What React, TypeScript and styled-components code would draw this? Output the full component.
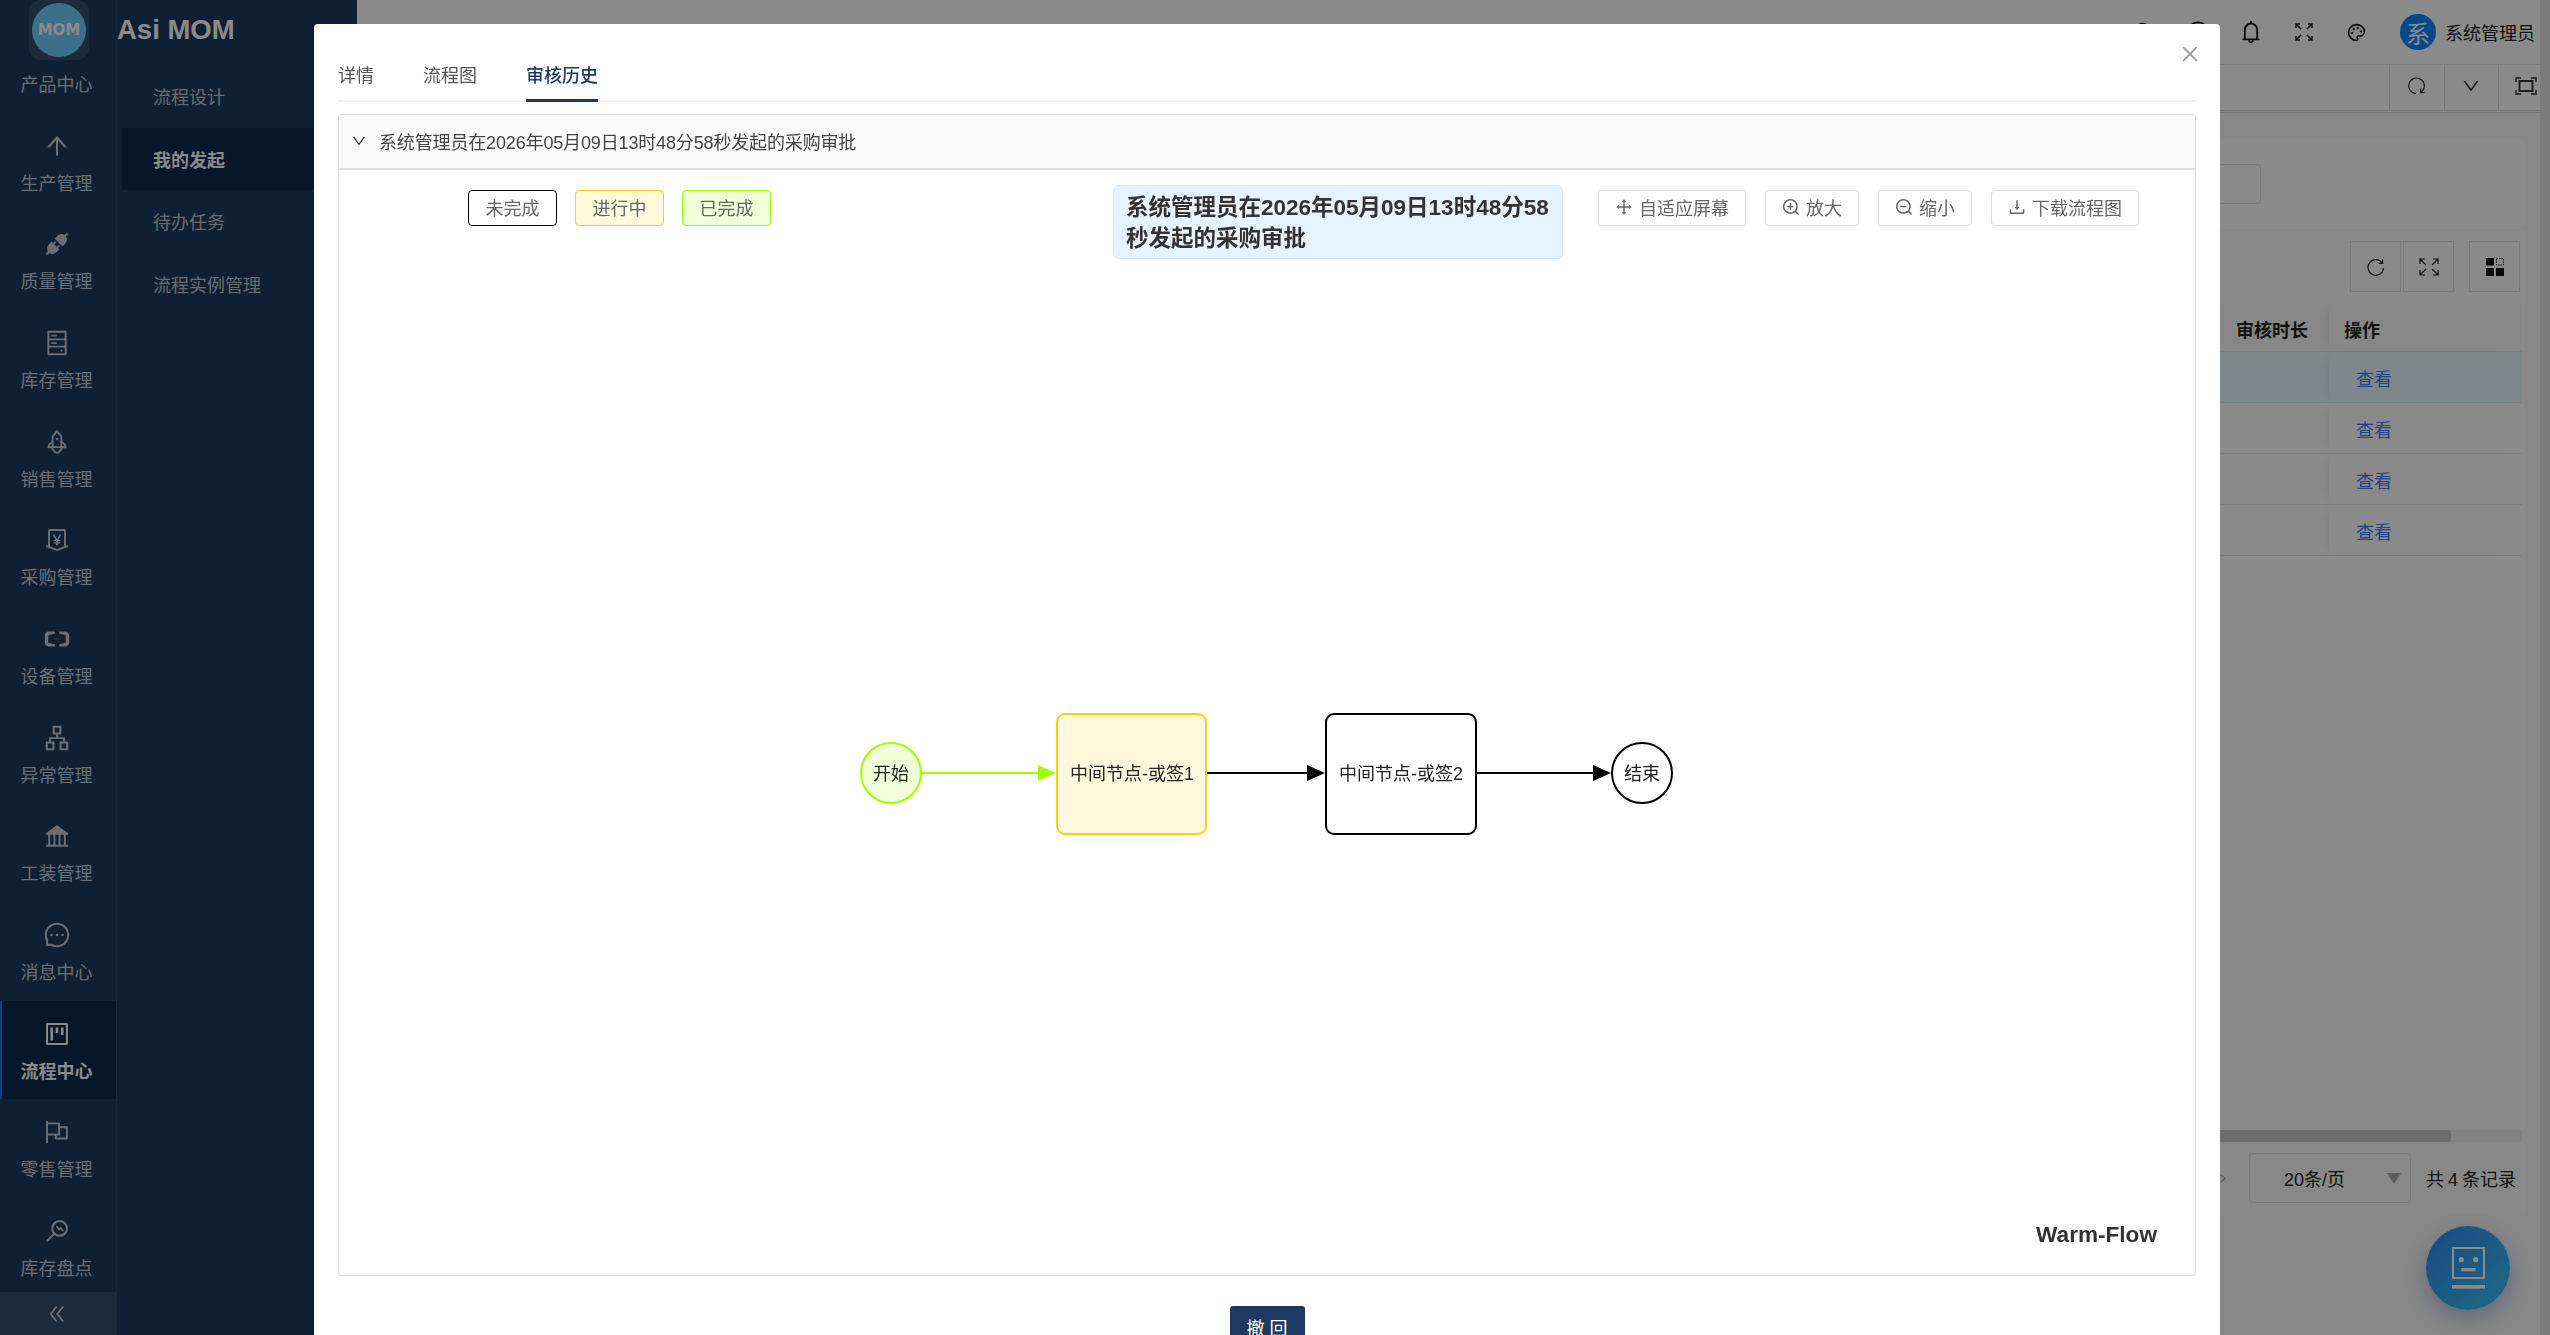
import React from "react";
import styled, { createGlobalStyle } from "styled-components";
import {
  AiOutlineArrowUp, AiFillApi, AiOutlineHdd, AiOutlineRocket, AiOutlineMoneyCollect, AiOutlineAliyun,
  AiOutlineApartment, AiFillBank, AiOutlineMessage, AiOutlineProject, AiOutlineFlag, AiOutlineMonitor,
  AiOutlineDoubleLeft, AiOutlineBell, AiOutlineClose, AiOutlineDown, AiOutlineDrag,
  AiOutlineZoomIn, AiOutlineZoomOut, AiOutlineDownload, AiOutlineSearch, AiOutlineQuestionCircle,
  AiOutlineRight, AiOutlineMenu,
} from "react-icons/ai";
import { LuPalette } from "react-icons/lu";

const FONT = `"Liberation Sans", "Noto Sans CJK SC", sans-serif`;

const Global = createGlobalStyle`
  html, body { margin: 0; padding: 0; height: 100%; overflow: hidden; background: #fff; }
  body { font-family: ${FONT}; font-size: 18px; color: #333; }
  #root { height: 100%; }
  * { box-sizing: border-box; }
`;

const Shell = styled.div`display: flex; width: 100%; height: 100vh; overflow: hidden;`;

const Rail = styled.aside`
  flex: 0 0 117px; height: 100%; display: flex; flex-direction: column;
  background: #1c3b62; box-shadow: inset -1px 0 0 #25466d;
`;
const LogoSlot = styled.div`flex: 0 0 60px; display: flex; justify-content: center; padding-left: 1px;`;
const LogoTile = styled.div`
  width: 60px; height: 60px; border-radius: 12px; background: #34506f;
  display: flex; align-items: center; justify-content: center;
`;
const LogoDisc = styled.div`
  width: 54px; height: 54px; border-radius: 50%; background: #70d0ff;
  display: flex; align-items: center; justify-content: center;
  color: #fff; font-family: "DejaVu Sans", sans-serif; font-weight: 700; font-size: 15px;
`;
const RailList = styled.div`flex: 1; min-height: 0; overflow: hidden; display: flex; flex-direction: column;`;
const RailItem = styled.div<{ $active?: boolean; $bare?: boolean }>`
  flex: 0 0 ${(p) => (p.$bare ? "52.6px" : "98.7px")};
  width: 116px;
  display: flex; flex-direction: column; align-items: center; justify-content: flex-start;
  padding: ${(p) => (p.$bare ? "12px" : "19px")} 3px 0 0;
  background: ${(p) => (p.$active ? "#0d2a4c" : "transparent")};
  box-shadow: ${(p) => (p.$active ? "inset 2px 0 0 #1c75df" : "none")};
  color: ${(p) => (p.$active ? "#fff" : "#c6ccd6")};
  font-size: 18px; line-height: 26px; font-weight: ${(p) => (p.$active ? 700 : 400)};
  svg { font-size: 28px; margin-bottom: 11px; display: block; }
`;
const Collapse = styled.div`
  flex: 0 0 43px; background: #34506f; color: #c6ccd6; padding-right: 3px;
  display: flex; align-items: center; justify-content: center; font-size: 22px;
`;

const SubNav = styled.nav`flex: 0 0 240px; height: 100%; background: #1c3b62; display: flex; flex-direction: column;`;
const Brand = styled.div`
  flex: 0 0 65px; display: flex; align-items: flex-start; justify-content: space-between;
  padding: 13px 12px 0 0; font-size: 27.5px; font-weight: 700; color: #fff; line-height: 34px;
  svg { font-size: 20px; margin-top: 8px; color: #ddd; }
`;
const SubItem = styled.div<{ $active?: boolean }>`
  height: 62.6px; margin-left: 5px; padding-left: 31px; display: flex; align-items: center;
  font-size: 18px; color: ${(p) => (p.$active ? "#fff" : "#c0c8d0")};
  font-weight: ${(p) => (p.$active ? 700 : 400)};
  background: ${(p) => (p.$active ? "#0d2a4c" : "transparent")};
`;

const Main = styled.main`flex: 1; min-width: 0; height: 100%; display: flex; flex-direction: column; background: #f9f9f9;`;
const TopBar = styled.header`
  flex: 0 0 65px; display: flex; align-items: center; padding: 0 5px 0 13px; background: #fff;
  border-bottom: 1px solid #e6e6e6; font-size: 18px; color: #333;
`;
const Crumbs = styled.div`display: flex; gap: 48px; width: 183px; white-space: nowrap;`;
const Notice = styled.div`display: flex; gap: 37px; margin-left: 652px; white-space: nowrap;`;
const TopRight = styled.div`display: flex; align-items: center; margin-left: auto;`;
const TopIcon = styled.span<{ $size?: number }>`
  width: 53px; display: flex; justify-content: center; color: #111; font-size: ${(p) => p.$size ?? 24}px;
`;
const Avatar = styled.span`
  width: 36px; height: 36px; margin-left: 17px; border-radius: 50%; background: #0b88ff; color: #fff;
  display: flex; align-items: center; justify-content: center; font-size: 24px;
`;
const UserName = styled.span`margin-left: 9px; color: #222; white-space: nowrap;`;

const TagBar = styled.div`
  flex: 0 0 48px; display: flex; justify-content: flex-end; background: #fff;
  border-bottom: 3px double #ddd;
`;
const TagBtn = styled.span<{ $w?: number; $pad?: number }>`
  width: ${(p) => p.$w ?? 54.5}px; display: flex; align-items: center; justify-content: center;
  padding: 0 0 3px ${(p) => p.$pad ?? 0}px;
  border-left: 1px solid #ddd; color: #333;
`;

const Content = styled.div`flex: 1; min-height: 0; display: flex; flex-direction: column; padding: 26px 15px 121px 15px;`;
const SearchCard = styled.section`
  flex: 0 0 90px; background: #fff; border-radius: 8px; display: flex; align-items: center;
  justify-content: flex-end; padding-right: 264px;
`;
const SearchInput = styled.div`width: 240px; height: 40px; border: 1px solid #dcdfe6; border-radius: 4px;`;
const TableCard = styled.section`
  flex: 1; min-height: 0; margin-top: 2px; padding-right: 3px; background: #fff; display: flex; flex-direction: column;
`;
const TableTools = styled.div`flex: 0 0 73px; display: flex; justify-content: flex-end; align-items: flex-start; padding: 10px 2px 0 0;`;
const ToolBtn = styled.span<{ $gap?: number }>`
  width: 51px; height: 51px; margin-left: ${(p) => p.$gap ?? 2}px; border: 1px solid #dcdfe6;
  display: flex; align-items: center; justify-content: center; color: #222;
`;
const Row = styled.div<{ $head?: boolean; $hi?: boolean }>`
  flex: 0 0 ${(p) => (p.$head ? "48px" : "51px")}; display: grid; grid-template-columns: 1fr 109px 193px;
  align-items: stretch; border-bottom: 1px solid #e8e8e8;
  background: ${(p) => (p.$hi ? "#e9fbff" : p.$head ? "#f9f9f9" : "#fff")};
  font-weight: ${(p) => (p.$head ? 700 : 400)}; color: ${(p) => (p.$head ? "#222" : "#333")};
`;
const Cell = styled.div`display: flex; align-items: center; padding: 2px 0 0 16px; white-space: nowrap;`;
const FixedCell = styled(Cell)<{ $link?: boolean }>`
  padding-left: ${(p) => (p.$link ? "27px" : "15px")};
  box-shadow: -8px 0 10px -8px rgba(0, 0, 0, .12);
  color: ${(p) => (p.$link ? "#3d7df5" : "inherit")};
`;
const TableFill = styled.div`flex: 1; min-height: 0;`;
const HScroll = styled.div`flex: 0 0 12px; background: #f3f3f3;`;
const HThumb = styled.div`width: 2079px; height: 100%; background: #c8c8c8; border-radius: 0 3px 3px 0;`;
const Pager = styled.div`flex: 0 0 72px; display: flex; align-items: center; justify-content: flex-end; padding-right: 6px; background: #fbfbfb; color: #222;`;
const PagerNext = styled.span`color: #999; font-size: 13px; margin-right: 20px; display: flex;`;
const PageSize = styled.div`
  width: 162px; height: 50px; border: 1px solid #dcdfe6; border-radius: 3px; display: flex; align-items: center;
  justify-content: space-between; padding: 0 9px 0 34px;
`;
const Caret = styled.span`width: 0; height: 0; border: 7px solid transparent; border-top: 11px solid #aaa; border-bottom: 0;`;
const Total = styled.span`margin-left: 15px; white-space: nowrap; word-spacing: -1px;`;
const PageTrack = styled.div`flex: 0 0 10px; height: 100%; background: #e4e4e4;`;

const Fab = styled.div`
  position: fixed; right: 40px; bottom: 25px; width: 84px; height: 84px; border-radius: 50%;
  background: linear-gradient(135deg, #3088f0, #3ac4f8); box-shadow: 0 8px 20px rgba(60, 90, 200, .35);
  display: flex; align-items: center; justify-content: center;
`;

const Overlay = styled.div`position: fixed; inset: 0; background: rgba(0, 0, 0, .46); z-index: 10;`;
const Modal = styled.div`
  position: fixed; z-index: 11; left: 314px; top: 24px; width: 1906px; bottom: 0; overflow: hidden;
  background: #fff; border-radius: 4px 4px 0 0; padding: 0 24px; display: flex; flex-direction: column;
`;
const CloseBtn = styled.span`position: absolute; top: 19px; right: 19px; color: #999; font-size: 22px; display: flex;`;
const Tabs = styled.div`flex: 0 0 78px; display: flex; align-items: flex-end; gap: 49px; border-bottom: 2px solid #f0f0f0;`;
const Tab = styled.div<{ $on?: boolean }>`
  height: 51px; margin-bottom: -2px; font-size: 18px; line-height: 26px; padding-top: 12px;
  color: ${(p) => (p.$on ? "#1f3a62" : "#555")}; font-weight: ${(p) => (p.$on ? 500 : 400)};
  border-bottom: 3px solid ${(p) => (p.$on ? "#1f3a62" : "transparent")};
`;
const Panel = styled.section`
  flex: 0 0 1162px; margin-top: 12px; border: 1px solid #dedede; border-radius: 3px; display: flex; flex-direction: column; overflow: hidden;
`;
const PanelHead = styled.div`
  flex: 0 0 55px; background: #fafafa; border-bottom: 2px solid #e0e0e0; display: flex; align-items: center;
  padding: 0 0 1px 12px; gap: 12px; font-size: 18px; color: #444; letter-spacing: -.15px;
  svg { font-size: 16px; color: #333; }
`;
const Toolbar = styled.div`flex: 0 0 90px; display: flex; align-items: flex-start; padding: 20px 0 0 129px;`;
const Legend = styled.div`display: flex; gap: 18px;`;
const LegendTag = styled.span<{ $bg: string; $line: string }>`
  width: 89px; height: 36px; padding-bottom: 2px; border-radius: 4px; border: 1.5px solid ${(p) => p.$line}; background: ${(p) => p.$bg};
  display: flex; align-items: center; justify-content: center; color: #666; font-size: 18px;
`;
const TitleBox = styled.div`
  width: 450px; height: 74px; margin: -5px 0 0 342px; padding: 7px 12px; background: #e6f3ff; border: 1px solid #d4e8fa;
  border-radius: 6px; color: #333; font-size: 22.5px; line-height: 30.5px; font-weight: 700;
`;
const Actions = styled.div`display: flex; gap: 19px; margin-left: 35px;`;
const ActionBtn = styled.span`
  height: 36px; padding: 0 16px 2px 15px; border: 1px solid #dcdfe6; border-radius: 4px; display: flex; align-items: center; gap: 5px;
  color: #666; font-size: 18px; white-space: nowrap;
  svg { font-size: 20px; flex: none; }
`;
const Canvas = styled.div`flex: 1; min-height: 0; overflow: hidden;`;
const Flow = styled.svg`
  display: block;
  text { font-family: ${FONT}; font-size: 18px; fill: #222; text-anchor: middle; dominant-baseline: central; }
`;
const Stamp = styled.div`
  flex: 0 0 80px; display: flex; justify-content: flex-end; padding: 21px 38px 0 0; color: #333;
  font-size: 22.6px; line-height: 38px; font-weight: 700;
`;
const ModalFoot = styled.div`flex: 0 0 60px; margin-top: 30px; display: flex; justify-content: center;`;
const PrimaryBtn = styled.span`
  width: 75px; height: 44px; padding: 0 0 2px 5px; background: #1f3a62; color: #fff; border-radius: 3px; display: flex; align-items: center;
  justify-content: center; font-size: 18px; letter-spacing: 5px;
`;

const railItems: [React.ReactNode, string][] = [
  [<AiOutlineArrowUp />, "生产管理"], [<AiFillApi />, "质量管理"], [<AiOutlineHdd />, "库存管理"],
  [<AiOutlineRocket />, "销售管理"], [<AiOutlineMoneyCollect />, "采购管理"], [<AiOutlineAliyun />, "设备管理"],
  [<AiOutlineApartment />, "异常管理"], [<AiFillBank />, "工装管理"], [<AiOutlineMessage />, "消息中心"],
  [<AiOutlineProject />, "流程中心"], [<AiOutlineFlag />, "零售管理"], [<AiOutlineMonitor />, "库存盘点"],
];

const ShrinkArrows = () => (
  <svg width="18" height="18" viewBox="0 0 18 18" fill="none" stroke="currentColor" strokeWidth="1.6">
    <path d="M2 2l4 4M16 2l-4 4M2 16l4-4M16 16l-4-4" />
    <path d="M1 5V1h4M13 1h4v4M1 13v4h4M13 17h4v-4" strokeWidth="1.4" />
  </svg>
);
const FrameIcon = () => (
  <svg width="22" height="18" viewBox="0 0 22 18" fill="none" stroke="#333" strokeWidth="1.5">
    <path d="M1 5V1h5M16 1h5v4M1 13v4h5M16 17h5v-4" />
    <rect x="4.5" y="4" width="13" height="10" strokeWidth="2" />
  </svg>
);
const ArcArrow = ({ turned, size = 18 }: { turned?: boolean; size?: number }) => (
  <svg width={size} height={size} viewBox="0 0 18 18" fill="none" stroke="currentColor" strokeWidth="1.2"
    transform={turned ? "rotate(90)" : undefined}>
    <path d="M15.2 5A7.8 7.8 0 1 0 16.6 10" />
    <path d="M15.6 1.4V5.3H11.7" />
  </svg>
);
const ExpandIcon = () => (
  <svg width="20" height="18" viewBox="0 0 20 18" fill="none" stroke="#222" strokeWidth="1.2">
    <path d="M1 6V1h5M1 1l6 6M19 6V1h-5M19 1l-6 6M1 12v5h5M1 17l6-6M19 12v5h-5M19 17l-6-6" />
  </svg>
);
const LayoutIcon = () => (
  <svg width="20" height="18" viewBox="0 0 20 18">
    <rect x="1" y="0" width="8" height="7.5" fill="#111" />
    <rect x="11.5" y="0.5" width="7" height="6.5" fill="none" stroke="#222" strokeDasharray="1.5 1" />
    <rect x="1" y="10" width="8" height="8" fill="#111" />
    <rect x="11" y="10" width="8" height="8" fill="#111" />
  </svg>
);
const BotIcon = () => (
  <svg width="33" height="42" viewBox="0 0 33 42" fill="#fff">
    <rect x="1" y="1" width="31" height="30" fill="none" stroke="#fff" strokeWidth="2" />
    <circle cx="9.3" cy="12.7" r="2.6" />
    <circle cx="23.7" cy="12.7" r="2.6" />
    <rect x="9.3" y="21" width="14.4" height="3.3" />
    <rect x="0" y="38" width="33" height="3.7" />
  </svg>
);

export default function App() {
  return (
    <>
      <Global />
      <Shell>
        <Rail>
          <LogoSlot>
            <LogoTile><LogoDisc>MOM</LogoDisc></LogoTile>
          </LogoSlot>
          <RailList>
            <RailItem $bare>产品中心</RailItem>
            {railItems.map(([icon, label]) => (
              <RailItem key={label} $active={label === "流程中心"}>{icon}{label}</RailItem>
            ))}
          </RailList>
          <Collapse><AiOutlineDoubleLeft /></Collapse>
        </Rail>
        <SubNav>
          <Brand><span>Asi MOM</span><AiOutlineMenu /></Brand>
          <SubItem>流程设计</SubItem>
          <SubItem $active>我的发起</SubItem>
          <SubItem>待办任务</SubItem>
          <SubItem>流程实例管理</SubItem>
        </SubNav>
        <Main>
          <TopBar>
            <Crumbs><span>流程中心</span><span>我的发起</span></Crumbs>
            <Notice><span>联系作者</span><span>微信</span></Notice>
            <TopRight>
              <TopIcon><AiOutlineSearch /></TopIcon>
              <TopIcon><AiOutlineQuestionCircle /></TopIcon>
              <TopIcon $size={26}><AiOutlineBell /></TopIcon>
              <TopIcon><ShrinkArrows /></TopIcon>
              <TopIcon $size={19}><LuPalette /></TopIcon>
              <Avatar>系</Avatar>
              <UserName>系统管理员</UserName>
            </TopRight>
          </TopBar>
          <TagBar>
            <TagBtn><ArcArrow turned /></TagBtn>
            <TagBtn><AiOutlineDown size={20} /></TagBtn>
            <TagBtn $w={42} $pad={12}><FrameIcon /></TagBtn>
          </TagBar>
          <Content>
            <SearchCard><SearchInput /></SearchCard>
            <TableCard>
              <TableTools>
                <ToolBtn><ArcArrow /></ToolBtn>
                <ToolBtn><ExpandIcon /></ToolBtn>
                <ToolBtn $gap={15}><LayoutIcon /></ToolBtn>
              </TableTools>
              <Row $head><Cell /><Cell>审核时长</Cell><FixedCell>操作</FixedCell></Row>
              {[0, 1, 2, 3].map((i) => (
                <Row key={i} $hi={i === 0}><Cell /><Cell /><FixedCell $link>查看</FixedCell></Row>
              ))}
              <TableFill />
              <HScroll><HThumb /></HScroll>
              <Pager>
                <PagerNext><AiOutlineRight /></PagerNext>
                <PageSize><span>20条/页</span><Caret /></PageSize>
                <Total>共 4 条记录</Total>
              </Pager>
            </TableCard>
          </Content>
        </Main>
        <PageTrack />
      </Shell>
      <Fab><BotIcon /></Fab>
      <Overlay />
      <Modal>
        <CloseBtn><AiOutlineClose /></CloseBtn>
        <Tabs>
          <Tab>详情</Tab>
          <Tab>流程图</Tab>
          <Tab $on>审核历史</Tab>
        </Tabs>
        <Panel>
          <PanelHead><AiOutlineDown />系统管理员在2026年05月09日13时48分58秒发起的采购审批</PanelHead>
          <Toolbar>
            <Legend>
              <LegendTag $bg="#fff" $line="#000">未完成</LegendTag>
              <LegendTag $bg="#fff8dc" $line="#ffcd17">进行中</LegendTag>
              <LegendTag $bg="#f0ffd9" $line="#9dff00">已完成</LegendTag>
            </Legend>
            <TitleBox>系统管理员在2026年05月09日13时48分58秒发起的采购审批</TitleBox>
            <Actions>
              <ActionBtn><AiOutlineDrag />自适应屏幕</ActionBtn>
              <ActionBtn><AiOutlineZoomIn />放大</ActionBtn>
              <ActionBtn><AiOutlineZoomOut />缩小</ActionBtn>
              <ActionBtn><AiOutlineDownload />下载流程图</ActionBtn>
            </Actions>
          </Toolbar>
          <Canvas>
            <Flow width="1858" height="936" viewBox="339 260 1858 936">
              <line x1="921" y1="773" x2="1038" y2="773" stroke="#9dff00" strokeWidth="2" />
              <polygon points="1038,765 1056,773 1038,781" fill="#9dff00" />
              <line x1="1206" y1="773" x2="1307" y2="773" stroke="#000" strokeWidth="2" />
              <polygon points="1307,765 1325,773 1307,781" fill="#000" />
              <line x1="1476" y1="773" x2="1593" y2="773" stroke="#000" strokeWidth="2" />
              <polygon points="1593,765 1611,773 1593,781" fill="#000" />
              <circle cx="891" cy="773" r="30" fill="#f0ffd9" stroke="#9dff00" strokeWidth="2" />
              <rect x="1057" y="714" width="149" height="120" rx="8" fill="#fff8dc" stroke="#ffcd17" strokeWidth="2" />
              <rect x="1326" y="714" width="150" height="120" rx="8" fill="#fff" stroke="#000" strokeWidth="2" />
              <circle cx="1642" cy="773" r="30" fill="#fff" stroke="#000" strokeWidth="2" />
              <text x="891" y="774">开始</text>
              <text x="1132" y="774">中间节点-或签1</text>
              <text x="1401" y="774">中间节点-或签2</text>
              <text x="1642" y="774">结束</text>
            </Flow>
          </Canvas>
          <Stamp>Warm-Flow</Stamp>
        </Panel>
        <ModalFoot><PrimaryBtn>撤回</PrimaryBtn></ModalFoot>
      </Modal>
    </>
  );
}
